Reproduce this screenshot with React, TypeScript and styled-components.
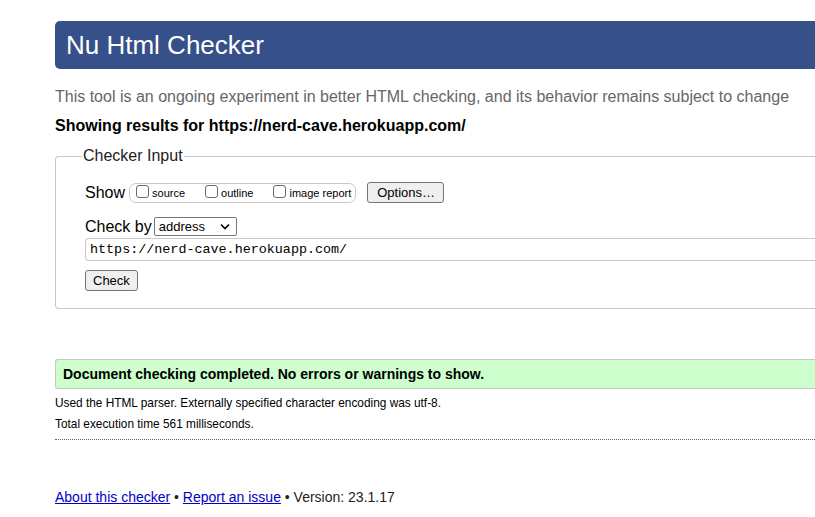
import React from "react";
import styled, { createGlobalStyle } from "styled-components";

const Global = createGlobalStyle`
  html, body { margin: 0; padding: 0; background: #fff; overflow: hidden; }
  body { font-family: "Liberation Sans", Arial, sans-serif; color: #000; }
`;

const Page = styled.div`
  padding: 21px 0 0 55px;
  width: 820px;
`;

const Header = styled.h1`
  margin: 0;
  height: 48px;
  box-sizing: border-box;
  background: #365089;
  border-radius: 5px 0 0 5px;
  color: #fff;
  font-size: 26px;
  font-weight: normal;
  line-height: 48px;
  padding-left: 11px;
`;

const Intro = styled.p`
  margin: 18px 0 0;
  color: #666;
  font-size: 16px;
  line-height: 19px;
`;

const Showing = styled.p`
  margin: 10px 0 0;
  font-size: 16px;
  font-weight: bold;
  line-height: 19px;
`;

const Fieldset = styled.fieldset`
  margin: 12px 0 0;
  padding: 8px 0 17px 29px;
  border: 1px solid #c8c8c8;
  border-right: none;
  border-radius: 4px 0 0 4px;
  min-width: 0;
`;

const Legend = styled.legend`
  font-size: 16px;
  padding: 0 1px;
  margin-left: -3px;
  color: #222;
`;

const Row = styled.div<{ $mt?: number }>`
  display: flex;
  align-items: center;
  margin-top: ${(p) => p.$mt ?? 0}px;
  font-size: 16px;
`;

const Label = styled.span`
  font-size: 16px;
  margin-right: 2px;
`;

const ShowGroup = styled.span`
  display: inline-flex;
  align-items: center;
  height: 20px;
  box-sizing: border-box;
  border: 1px solid #c8c8c8;
  border-radius: 7px;
  padding: 1px 4px 0 6px;
  margin-left: 2px;
`;

const CheckLabel = styled.label<{ $gap?: number }>`
  display: inline-flex;
  align-items: center;
  font-size: 11px;
  margin-right: ${(p) => p.$gap ?? 0}px;
`;

const Box = styled.span`
  display: inline-block;
  width: 11px;
  height: 11px;
  border: 1px solid #6b6b6b;
  border-radius: 3px;
  margin-right: 3px;
  margin-top: -4px;
  background: #fff;
`;

const Button = styled.button<{ $ml?: number }>`
  font-family: "Liberation Sans", Arial, sans-serif;
  font-size: 13px;
  height: 21px;
  padding: 0 7px;
  margin-left: ${(p) => p.$ml ?? 0}px;
  background: #efefef;
  border: 1px solid #767676;
  border-radius: 3px;
  color: #000;
`;

const WideButton = styled(Button)`
  padding: 0 8px 0 9px;
`;

const Select = styled.div`
  display: inline-flex;
  align-items: center;
  justify-content: space-between;
  width: 83px;
  height: 19px;
  box-sizing: border-box;
  border: 1px solid #767676;
  border-radius: 2px;
  padding: 0 6px 0 4px;
  font-size: 13px;
`;

const UrlInput = styled.div`
  margin-top: 2px;
  height: 23px;
  box-sizing: border-box;
  border: 1px solid #c8c8c8;
  border-right: none;
  border-radius: 4px 0 0 4px;
  padding-left: 4px;
  font-family: "Liberation Mono", "DejaVu Sans Mono", monospace;
  font-size: 13.4px;
  line-height: 21px;
`;

const Success = styled.div`
  margin-top: 50px;
  height: 30px;
  box-sizing: border-box;
  background: #ccffcc;
  border: 1px solid #c8c8c8;
  border-right: none;
  border-radius: 3px 0 0 3px;
  padding-left: 7px;
  font-size: 14px;
  font-weight: bold;
  line-height: 28px;
`;

const Small = styled.p<{ $mt: number }>`
  margin: ${(p) => p.$mt}px 0 0;
  font-size: 11.85px;
  line-height: 14px;
`;

const Dotted = styled.hr`
  margin: 8px 0 0;
  border: none;
  border-top: 1px dotted #666;
`;

const Footer = styled.p`
  margin: 49px 0 0;
  font-size: 14px;
  color: #222;
`;

const Link = styled.a`
  color: #0000cc;
  text-decoration: underline;
`;

const Chevron = () => (
  <svg width="10" height="7" viewBox="0 0 10 7">
    <path d="M1 1.5 L5 5.5 L9 1.5" fill="none" stroke="#000" strokeWidth="1.6" />
  </svg>
);

export default function App() {
  return (
    <>
      <Global />
      <Page>
        <Header>Nu Html Checker</Header>
        <Intro>
          This tool is an ongoing experiment in better HTML checking, and its
          behavior remains subject to change
        </Intro>
        <Showing>Showing results for https://nerd-cave.herokuapp.com/</Showing>
        <Fieldset>
          <Legend>Checker Input</Legend>
          <Row $mt={9}>
            <Label>Show</Label>
            <ShowGroup>
              <CheckLabel $gap={20}>
                <Box />
                source
              </CheckLabel>
              <CheckLabel $gap={20}>
                <Box />
                outline
              </CheckLabel>
              <CheckLabel>
                <Box />
                image report
              </CheckLabel>
            </ShowGroup>
            <WideButton $ml={11}>Options…</WideButton>
          </Row>
          <Row $mt={14}>
            <Label>Check by</Label>
            <Select>
              address
              <Chevron />
            </Select>
          </Row>
          <UrlInput>https://nerd-cave.herokuapp.com/</UrlInput>
          <Row $mt={9}>
            <Button>Check</Button>
          </Row>
        </Fieldset>
        <Success>Document checking completed. No errors or warnings to show.</Success>
        <Small $mt={7}>
          Used the HTML parser. Externally specified character encoding was utf-8.
        </Small>
        <Small $mt={7}>Total execution time 561 milliseconds.</Small>
        <Dotted />
        <Footer>
          <Link href="#">About this checker</Link> •{" "}
          <Link href="#">Report an issue</Link> • Version: 23.1.17
        </Footer>
      </Page>
    </>
  );
}
